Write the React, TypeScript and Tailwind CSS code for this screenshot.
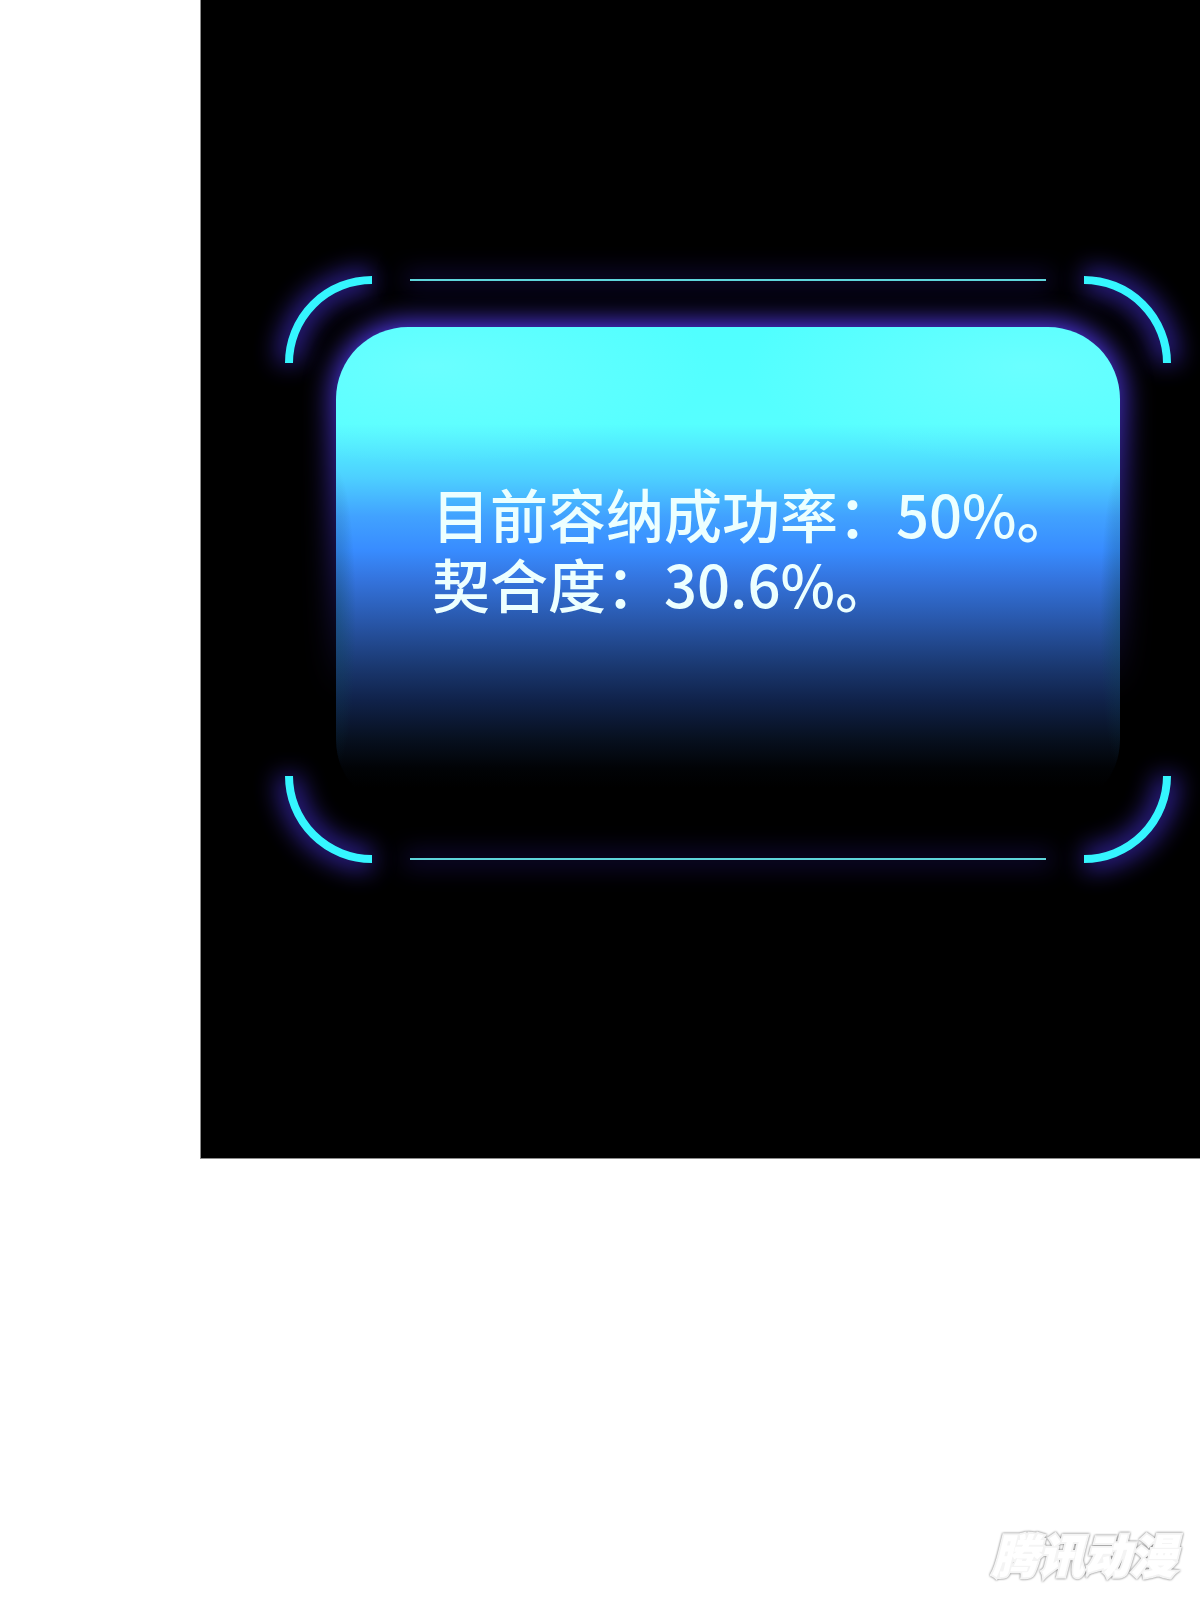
const readings = ["目前容纳成功率：50%。", "契合度：30.6%。"];

function Corner({ className }: { className: string }) {
  return (
    <svg
      viewBox="0 0 88 88"
      className={`h-[88px] w-[88px] shrink-0 overflow-visible ${className}`}
      fill="none"
      aria-hidden="true"
    >
      <path
        d="M4 87A83 83 0 0 1 87 4"
        stroke="#3626a8"
        strokeWidth="24"
        className="opacity-85 blur-[12px]"
      />
      <path d="M4 87A83 83 0 0 1 87 4" stroke="#35f6ff" strokeWidth="8" />
    </svg>
  );
}

function FrameLine() {
  return (
    <div className="my-[3px] h-[2px] grow bg-[#5fd6dc] shadow-[0_0_24px_6px_#130c40]" />
  );
}

function StatusFrame() {
  return (
    <div className="grid">
      <div className="col-start-1 row-start-1 flex flex-col justify-between">
        <div className="flex items-start gap-[37px]">
          <Corner className="" />
          <FrameLine />
          <Corner className="rotate-90" />
        </div>
        <div className="flex items-end gap-[37px]">
          <Corner className="-rotate-90" />
          <FrameLine />
          <Corner className="rotate-180" />
        </div>
      </div>

      {/* purple glow, fades out towards the bottom of the card */}
      <div className="col-start-1 row-start-1 m-[45px] rounded-[78px] bg-linear-to-b from-[#5038e8] to-transparent to-75% blur-[13px]" />

      <div className="z-10 col-start-1 row-start-1 m-[51px] h-[485px] rounded-[72px] bg-[radial-gradient(ellipse_20px_150px_at_0_60%,rgba(10,70,80,0.4),transparent),radial-gradient(ellipse_20px_150px_at_100%_60%,rgba(10,70,80,0.4),transparent),radial-gradient(ellipse_280px_100px_at_12%_8%,rgba(150,255,255,0.35),transparent),radial-gradient(ellipse_280px_100px_at_88%_8%,rgba(150,255,255,0.35),transparent),linear-gradient(to_bottom,#50ffff_0%,#56ffff_20%,#4dd0ff_31%,#41a2ff_39%,#388cff_46%,#3474de_52%,#2856a8_61%,#1a3870_70%,#10224a_77%,#07101f_85%,#010306_91%,#000_95%)] pt-[151px] pl-24">
        <p className="text-[58px] leading-[70px] font-medium whitespace-pre text-[#ecffff]">
          {readings.join("\n")}
        </p>
      </div>
    </div>
  );
}

export default function App() {
  return (
    <main className="flex min-h-screen flex-col bg-white font-['Noto_Sans_CJK_SC',sans-serif]">
      <section className="ml-[200px] border-b border-l border-[#8c8c8c] bg-black pt-[276px] pr-[29px] pb-[295px] pl-[84px]">
        <StatusFrame />
      </section>
      <footer className="mt-auto flex justify-end pr-6 pb-[17px]">
        <span className="text-[46px] leading-[60px] font-black text-white italic drop-shadow-[0_0_1px_#666666] [-webkit-text-stroke:4px_#f4f4f4] [paint-order:stroke_fill]">
          腾讯动漫
        </span>
      </footer>
    </main>
  );
}
